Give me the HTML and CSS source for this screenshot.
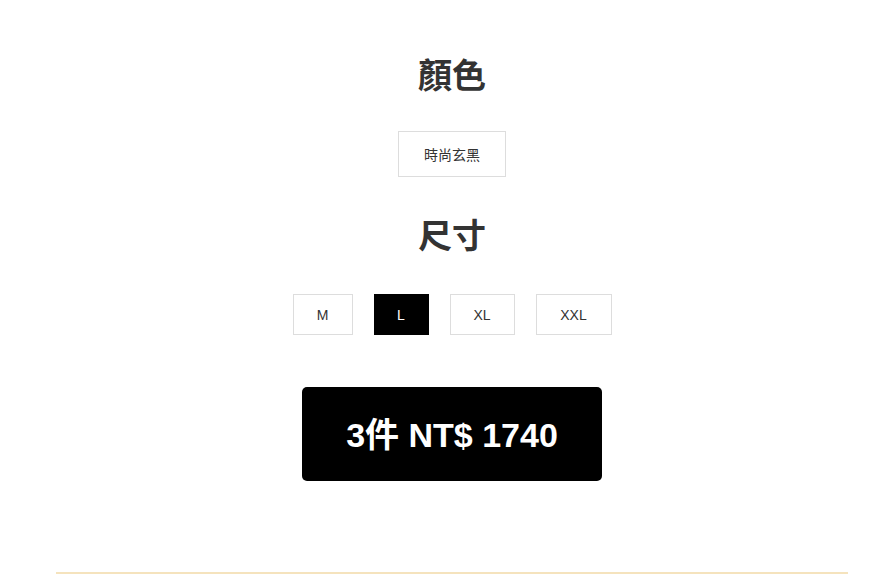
FILE: index.html
```html
<!DOCTYPE html>
<html lang="zh-Hant">
<head>
    <meta charset="UTF-8">
    <meta name="viewport" content="width=device-width, initial-scale=1.0">
    <title>選擇規格</title>
    <link rel="stylesheet" href="styles.css">
</head>
<body>
    <div class="container">
        <h2 class="title">顏色</h2>
        <div class="options">
            <button class="option color-option">時尚玄黑</button>
        </div>

        <h2 class="title title-size">尺寸</h2>
        <div class="options sizes">
            <button class="option size-m">M</button>
            <button class="option size-l active">L</button>
            <button class="option size-xl">XL</button>
            <button class="option size-xxl">XXL</button>
        </div>

        <button class="buy-btn">3件 NT$ 1740</button>

        <hr class="divider">
    </div>
</body>
</html>
```

FILE: styles.css
```css
body {
    margin: 0;
    background: #fff;
    font-family: Arial, "Liberation Sans", "Noto Sans CJK TC", sans-serif;
    color: #333;
}

.container {
    width: 792px;
    margin-left: 56px;
    display: flex;
    flex-direction: column;
    align-items: center;
}

.title {
    margin: 56px 0 0;
    height: 40px;
    line-height: 40px;
    font-size: 34px;
    font-weight: bold;
    color: #333;
}

.title-size {
    margin-top: 39px;
}

.options {
    display: flex;
    justify-content: center;
    gap: 21px;
    margin-top: 35px;
}

.sizes {
    margin-top: 38px;
}

.option {
    font-family: Arial, "Liberation Sans", "Noto Sans CJK TC", sans-serif;
    font-size: 14px;
    color: #333;
    background: #fff;
    border: 1px solid #ddd;
    padding: 0;
    cursor: pointer;
}

.color-option {
    width: 108px;
    height: 46px;
}

.sizes .option {
    height: 41px;
}

.size-m { width: 60px; }
.size-l { width: 55px; }
.size-xl { width: 65px; }
.size-xxl { width: 76px; }

.option.active {
    background: #000;
    border-color: #000;
    color: #fff;
}

.buy-btn {
    margin-top: 52px;
    width: 300px;
    height: 94px;
    padding: 0 0 4px;
    background: #000;
    color: #fff;
    border: none;
    border-radius: 5px;
    font-family: Arial, "Liberation Sans", "Noto Sans CJK TC", sans-serif;
    font-size: 34px;
    font-weight: bold;
    cursor: pointer;
}

.divider {
    width: 100%;
    margin: 91px 0 0;
    border: none;
    height: 2px;
    background: #f5e3bd;
}
```
